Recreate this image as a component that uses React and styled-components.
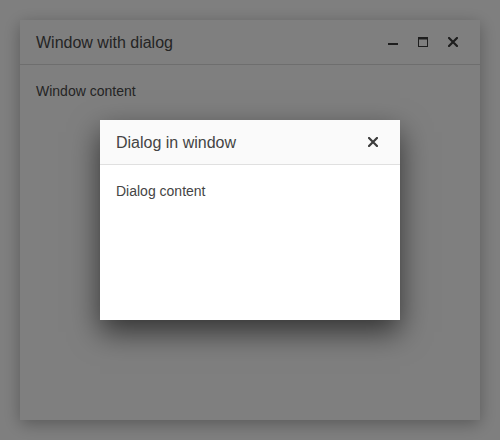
import styled, { createGlobalStyle } from "styled-components";

const GlobalStyle = createGlobalStyle`
  html, body {
    margin: 0;
    padding: 0;
    background: #ffffff;
    font-family: "Liberation Sans", Arial, sans-serif;
  }
`;

function CloseIcon({ size = 10 }) {
  return (
    <svg width={size} height={size} viewBox="0 0 10 10">
      <path d="M1 1 L9 9 M9 1 L1 9" stroke="#3c3c3c" strokeWidth="2.2" strokeLinecap="square" fill="none" />
    </svg>
  );
}

function App() {
  return (
    <>
      <GlobalStyle />
      <Page>
        <Window>
          <TitleBar>
            <WindowTitle>Window with dialog</WindowTitle>
            <Controls>
              <ControlButton aria-label="minimize">
                <svg width="10" height="10" viewBox="0 0 10 10">
                  <rect x="0" y="6" width="10" height="2" fill="#3c3c3c" />
                </svg>
              </ControlButton>
              <ControlButton aria-label="maximize">
                <svg width="10" height="10" viewBox="0 0 10 10">
                  <rect x="0.5" y="0.5" width="9" height="9" stroke="#3c3c3c" strokeWidth="1" fill="none" />
                  <rect x="0" y="0" width="10" height="2.5" fill="#3c3c3c" />
                </svg>
              </ControlButton>
              <ControlButton aria-label="close">
                <CloseIcon />
              </ControlButton>
            </Controls>
          </TitleBar>
          <WindowBody>Window content</WindowBody>
          <DialogLayer>
            <Dialog>
              <DialogHeader>
                <DialogTitle>Dialog in window</DialogTitle>
                <ControlButton aria-label="close dialog">
                  <CloseIcon />
                </ControlButton>
              </DialogHeader>
              <DialogBody>Dialog content</DialogBody>
            </Dialog>
          </DialogLayer>
        </Window>
        <PageOverlay />
      </Page>
    </>
  );
}

const Page = styled.div`
  width: 500px;
  height: 440px;
  padding: 20px;
  box-sizing: border-box;
  position: relative;
`;

const PageOverlay = styled.div`
  position: absolute;
  inset: 0;
  background: rgba(0, 0, 0, 0.5);
  z-index: 1;
  pointer-events: none;
`;

const Window = styled.div`
  position: relative;
  width: 460px;
  height: 400px;
  background: #ffffff;
  box-shadow: 0 4px 16px rgba(0, 0, 0, 0.3);
  display: flex;
  flex-direction: column;
`;

const TitleBar = styled.div`
  height: 44px;
  border-bottom: 1px solid #dcdcdc;
  display: flex;
  align-items: center;
  justify-content: space-between;
  padding: 0 16px;
`;

const WindowTitle = styled.div`
  font-size: 16px;
  color: #4a4a4a;
  padding-top: 2px;
`;

const Controls = styled.div`
  display: flex;
  gap: 10px;
  margin-right: 1px;
`;

const ControlButton = styled.div`
  width: 20px;
  height: 20px;
  display: flex;
  align-items: center;
  justify-content: center;
`;

const WindowBody = styled.div`
  padding: 16px;
  font-size: 14px;
  line-height: 20px;
  color: #4a4a4a;
`;

const DialogLayer = styled.div`
  position: absolute;
  inset: 0;
  z-index: 2;
  display: flex;
  align-items: center;
  justify-content: center;
`;

const Dialog = styled.div`
  width: 300px;
  height: 200px;
  background: #ffffff;
  box-shadow: 0 12px 28px rgba(0, 0, 0, 0.6);
  display: flex;
  flex-direction: column;
`;

const DialogHeader = styled.div`
  height: 44px;
  background: #fafafa;
  border-bottom: 1px solid #e0e0e0;
  display: flex;
  align-items: center;
  justify-content: space-between;
  padding: 0 17px 0 16px;
`;

const DialogTitle = styled.div`
  font-size: 16px;
  color: #444;
  padding-top: 2px;
`;

const DialogBody = styled.div`
  padding: 16px;
  font-size: 14px;
  line-height: 20px;
  color: #444;
`;

export default App;
